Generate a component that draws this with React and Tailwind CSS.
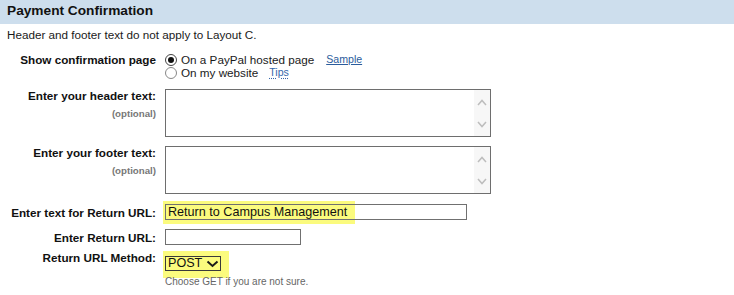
import React from "react";

const Label = ({ children, className = "" }) => (
  <div className={`w-[156px] shrink-0 text-right font-bold leading-[13px] text-[#111] ${className}`}>
    {children}
  </div>
);

const Radio = ({ checked }) => (
  <span
    className={`flex h-[12px] w-[12px] shrink-0 items-center justify-center rounded-full border bg-white ${
      checked ? "border-[#444]" : "border-[#888]"
    }`}
  >
    {checked && <span className="h-[6px] w-[6px] rounded-full bg-[#111]" />}
  </span>
);

const Scroller = () => (
  <div className="flex h-full w-[16px] flex-col items-center bg-[#f7f7f7] pt-[9px]">
    <svg width="10" height="7" viewBox="0 0 10 7">
      <path d="M1 6 L5 1.5 L9 6" fill="none" stroke="#bdbdbd" strokeWidth="1.5" />
    </svg>
    <svg width="10" height="7" viewBox="0 0 10 7" className="mt-[15px]">
      <path d="M1 1 L5 5.5 L9 1" fill="none" stroke="#bdbdbd" strokeWidth="1.5" />
    </svg>
  </div>
);

const TextBox = () => (
  <div className="flex h-[48px] w-[326px] justify-end border border-[#6e6e6e] bg-white">
    <Scroller />
  </div>
);

export default function App() {
  return (
    <div className="h-[295px] w-[734px] bg-white font-['Liberation_Sans',Arial,sans-serif] text-[11.7px] text-[#1a1a1a]">
      <div className="h-[24px] bg-[#cddeed] px-[7px] text-[13.7px] font-bold leading-[22px] text-[#111]">
        Payment Confirmation
      </div>

      <div className="mt-[4px] px-[7px] leading-[14px]">
        Header and footer text do not apply to Layout C.
      </div>

      <div className="mt-[11px] flex gap-[9px]">
        <Label>Show confirmation page</Label>
        <div className="flex flex-col leading-[13px]">
          <div className="flex h-[13px] items-center">
            <Radio checked />
            <span className="ml-[4px]">On a PayPal hosted page</span>
            <a href="#" className="ml-[12px] text-[10.6px] text-[#2b5c9c] underline">
              Sample
            </a>
          </div>
          <div className="flex h-[13px] items-center">
            <Radio />
            <span className="ml-[4px]">On my website</span>
            <a
              href="#"
              className="ml-[11px] text-[10.6px] text-[#3566aa] underline decoration-dotted underline-offset-2"
            >
              Tips
            </a>
          </div>
        </div>
      </div>

      <div className="mt-[10px] flex gap-[9px]">
        <div className="w-[156px] shrink-0 text-right">
          <div className="font-bold leading-[13px] text-[#111]">Enter your header text:</div>
          <div className="mt-[6px] text-[9.7px] font-bold leading-[12px] text-[#777]">(optional)</div>
        </div>
        <TextBox />
      </div>

      <div className="mt-[9px] flex gap-[9px]">
        <div className="w-[156px] shrink-0 text-right">
          <div className="font-bold leading-[13px] text-[#111]">Enter your footer text:</div>
          <div className="mt-[6px] text-[9.7px] font-bold leading-[12px] text-[#777]">(optional)</div>
        </div>
        <TextBox />
      </div>

      <div className="mt-[10px] flex gap-[9px]">
        <Label className="mt-[2px]">Enter text for Return URL:</Label>
        <div className="relative">
          <span className="absolute left-[-2px] top-[-3px] h-[23px] w-[192px] bg-[#fbfb7e]" />
          <div className="relative h-[16px] w-[302px] border border-[#707070] pl-[2px] text-[12.6px] leading-[14px] text-[#111]">
            Return to Campus Management
          </div>
        </div>
      </div>

      <div className="mt-[9px] flex gap-[9px]">
        <Label className="mt-[2px]">Enter Return URL:</Label>
        <div className="h-[16px] w-[136px] border border-[#707070] bg-white" />
      </div>

      <div className="mt-[6px] flex gap-[9px]">
        <Label>Return URL Method:</Label>
        <div className="-ml-[2px] bg-[#fbfb7e] pb-[7px] pl-[2px] pr-[8px] pt-[5px]">
          <div className="flex h-[15px] w-[56px] items-center border border-[#3a3a3a] pl-[2px] text-[12.6px] leading-[13px] text-[#111]">
            <span>POST</span>
            <svg width="13" height="8" viewBox="0 0 13 8" className="ml-[4px]">
              <path d="M1.5 1.5 L6.5 6 L11.5 1.5" fill="none" stroke="#1a1a1a" strokeWidth="2" />
            </svg>
          </div>
        </div>
      </div>

      <div className="-mt-[2px] pl-[165px] text-[10px] leading-[12px] text-[#666]">
        Choose GET if you are not sure.
      </div>
    </div>
  );
}
